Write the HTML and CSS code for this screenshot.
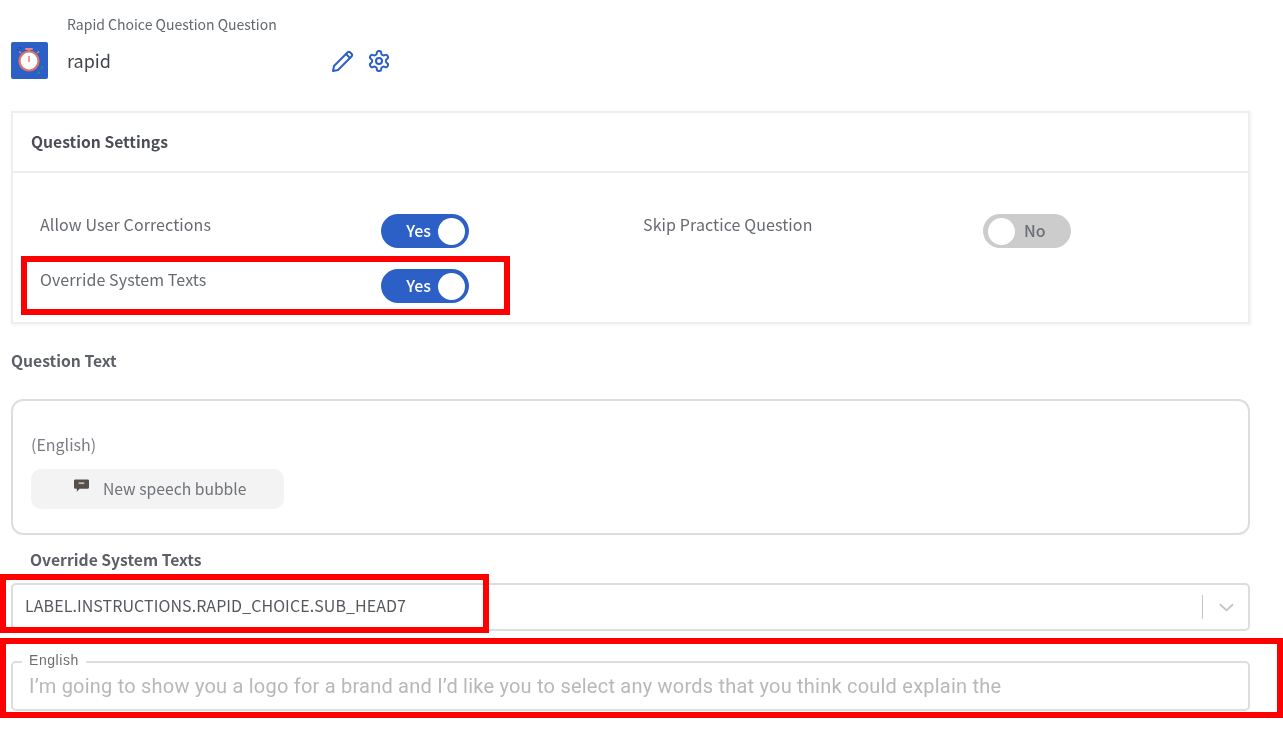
FILE: index.html
```html
<!DOCTYPE html>
<html lang="en">
<head>
    <meta charset="UTF-8">
    <meta name="viewport" content="width=device-width, initial-scale=1.0">
    <title>Rapid Choice Question</title>
    <link rel="stylesheet" href="styles.css">
</head>
<body>
    <div class="page">
        <div class="question-head">
            <svg class="type-icon" viewBox="0 0 37 37">
                <rect width="37" height="37" rx="2" fill="#2c60c6"></rect>
                <rect x="14" y="6" width="8" height="2" rx="1" fill="#e08a80"></rect>
                <line x1="18" y1="8" x2="18" y2="10" stroke="#e08a80" stroke-width="2"></line>
                <line x1="26" y1="11" x2="28" y2="9.500" stroke="#e08a80" stroke-width="1.500"></line>
                <line x1="10" y1="11" x2="8" y2="9.500" stroke="#e08a80" stroke-width="1.500"></line>
                <circle cx="18" cy="19" r="9.500" fill="#ffffff" stroke="#e0726c" stroke-width="2.200"></circle>
                <line x1="18" y1="14" x2="18" y2="20" stroke="#e05a55" stroke-width="1.200"></line>
                <path d="M30 27 L32 24 M26 32 L29 30" stroke="#2f8f78" stroke-width="1.200" fill="none"></path>
                <path d="M6 7 L8 9 M9 5 L10 7" stroke="#1c3f8a" stroke-width="1" fill="none"></path>
            </svg>
            <div class="head-text">
                <div class="head-label">Rapid Choice Question Question</div>
                <div class="head-name">rapid</div>
            </div>
            <div class="head-actions">
                <svg class="action-icon" viewBox="0 0 24 24" fill="none" stroke="currentColor" stroke-width="2" stroke-linecap="round" stroke-linejoin="round">
                    <path d="M3 21l1-5L17.500 2.500a2 2 0 0 1 2.800 0l1.200 1.200a2 2 0 0 1 0 2.800L8 20z"></path>
                    <line x1="16" y1="4" x2="20" y2="8"></line>
                </svg>
                <svg class="action-icon gear" viewBox="0 0 24 24" fill="none" stroke="currentColor" stroke-width="2" stroke-linecap="round" stroke-linejoin="round">
                    <path d="M12.220 2h-.44a2 2 0 0 0-2 2v.18a2 2 0 0 1-1 1.730l-.43.25a2 2 0 0 1-2 0l-.15-.08a2 2 0 0 0-2.730.73l-.22.38a2 2 0 0 0 .73 2.730l.15.1a2 2 0 0 1 1 1.720v.51a2 2 0 0 1-1 1.740l-.15.09a2 2 0 0 0-.73 2.730l.22.38a2 2 0 0 0 2.730.73l.15-.08a2 2 0 0 1 2 0l.43.25a2 2 0 0 1 1 1.730V20a2 2 0 0 0 2 2h.44a2 2 0 0 0 2-2v-.18a2 2 0 0 1 1-1.730l.43-.25a2 2 0 0 1 2 0l.15.08a2 2 0 0 0 2.730-.73l.22-.39a2 2 0 0 0-.73-2.730l-.15-.08a2 2 0 0 1-1-1.740v-.5a2 2 0 0 1 1-1.740l.15-.09a2 2 0 0 0 .73-2.730l-.22-.38a2 2 0 0 0-2.730-.73l-.15.08a2 2 0 0 1-2 0l-.43-.25a2 2 0 0 1-1-1.730V4a2 2 0 0 0-2-2z"></path>
                    <circle cx="12" cy="12" r="3"></circle>
                </svg>
            </div>
        </div>

        <section class="card">
            <div class="card-title">Question Settings</div>
            <div class="settings-grid">
                <div class="setting">
                    <span class="setting-label">Allow User Corrections</span>
                    <span class="toggle on"><span class="toggle-text">Yes</span><span class="knob"></span></span>
                </div>
                <div class="setting setting-right">
                    <span class="setting-label">Skip Practice Question</span>
                    <span class="toggle off"><span class="knob"></span><span class="toggle-text">No</span></span>
                </div>
                <div class="setting">
                    <span class="setting-label">Override System Texts</span>
                    <span class="toggle on"><span class="toggle-text">Yes</span><span class="knob"></span></span>
                </div>
            </div>
        </section>

        <h3 class="section-title">Question Text</h3>
        <div class="text-box">
            <div class="lang">(English)</div>
            <div class="bubble-btn">
                <svg class="bubble-icon" viewBox="0 0 16 14">
                    <path d="M1.500 0h13A1.500 1.500 0 0 1 16 1.500v7a1.500 1.500 0 0 1-1.500 1.500H6l-3 3v-3H1.500A1.500 1.500 0 0 1 0 8.500v-7A1.500 1.500 0 0 1 1.500 0z" fill="#55504c"></path>
                    <path d="M5 3h6v2H5z" fill="#c9b7a0"></path>
                </svg>
                <span>New speech bubble</span>
            </div>
        </div>

        <h3 class="override-title">Override System Texts</h3>
        <div class="select-box">
            <span class="select-value">LABEL.INSTRUCTIONS.RAPID_CHOICE.SUB_HEAD7</span>
            <span class="select-sep"></span>
            <svg class="chevron" viewBox="0 0 16 9" fill="none" stroke="currentColor" stroke-width="2">
                <polyline points="1 1 8 7.500 15 1"></polyline>
            </svg>
        </div>
        <fieldset class="outlined">
            <legend>English</legend>
            <input class="outlined-input" type="text" placeholder="I’m going to show you a logo for a brand and I’d like you to select any words that you think could explain the">
        </fieldset>
    </div>

    <!-- annotation boxes on top of the screenshot -->
    <div class="mark mark-toggle"></div>
    <div class="mark mark-select"></div>
    <div class="mark mark-input"></div>
</body>
</html>
```

FILE: styles.css
```css
* {
    margin: 0;
    padding: 0;
    box-sizing: border-box;
}

body {
    font-family: "Noto Sans CJK KR", "Noto Sans", sans-serif;
    background: white;
    color: #55595f;
    height: 734px;
    overflow: hidden;
    position: relative;
}

.page {
    width: 1250px;
    padding-left: 11px;
    filter: blur(0.4px);
}

.question-head {
    display: flex;
    height: 111px;
    padding-top: 15px;
    align-items: flex-start;
}

.type-icon {
    width: 37px;
    height: 37px;
    flex-shrink: 0;
    margin-top: 27px;
}

.head-text {
    width: 263px;
    margin-left: 19px;
}

.head-label {
    font-size: 14px;
    line-height: 18px;
    color: #63676e;
}

.head-name {
    font-size: 18px;
    line-height: 24px;
    margin-top: 15px;
    color: #42464c;
}

.head-actions {
    display: flex;
    gap: 13px;
    color: #2c60c6;
    padding-top: 35px;
}

.action-icon {
    width: 24px;
    height: 24px;
}

.gear {
    margin-top: -1px;
}

.card {
    height: 213px;
    border: 2px solid #eeeeee;
    box-shadow: 1px 1px 4px rgba(0, 0, 0, 0.06);
}

.card-title {
    height: 60px;
    padding: 18px 18px 0;
    font-size: 15.700px;
    line-height: 22px;
    font-weight: 700;
    color: #4a4e54;
    border-bottom: 2px solid #eeeeee;
}

.settings-grid {
    display: grid;
    grid-template-columns: 603px 1fr;
    row-gap: 20px;
    padding: 40px 0 0 27px;
}

.setting {
    display: flex;
    align-items: flex-start;
}

.setting-label {
    width: 341px;
    font-size: 16px;
    line-height: 22px;
    letter-spacing: 0.1px;
    color: #666a70;
}

.setting-right .setting-label {
    width: 340px;
}

.toggle {
    width: 88px;
    height: 34px;
    margin-top: 1px;
    border-radius: 17px;
    display: flex;
    align-items: center;
    padding-bottom: 2px;
    font-size: 16px;
    font-weight: 500;
}

.toggle.on {
    background: #2c60c6;
    color: white;
    justify-content: flex-end;
    padding-right: 4px;
    gap: 7px;
}

.toggle.off {
    background: #cccccc;
    color: #6d6f78;
    padding-left: 5px;
    gap: 9px;
}

.knob {
    width: 27px;
    height: 27px;
    border-radius: 50%;
    background: white;
    margin-bottom: -2px;
}

.section-title {
    font-size: 15.700px;
    line-height: 22px;
    font-weight: 700;
    color: #5c6066;
    margin-top: 26px;
}

.text-box {
    height: 136px;
    margin-top: 27px;
    border: 2px solid #dddddd;
    border-radius: 12px;
    padding: 32px 18px 0;
}

.lang {
    font-size: 16px;
    line-height: 22px;
    color: #7a7d83;
}

.bubble-btn {
    width: 253px;
    height: 40px;
    margin-top: 14px;
    padding: 0 0 2px 43px;
    background: #f3f3f3;
    border-radius: 10px;
    display: flex;
    align-items: center;
    font-size: 15.700px;
    color: #6f7278;
}

.bubble-icon {
    width: 15px;
    height: 14px;
    margin-right: 14px;
    margin-top: -5px;
}

.override-title {
    font-size: 15.700px;
    line-height: 22px;
    font-weight: 700;
    color: #5c6066;
    margin: 14px 0 0 19px;
}

.select-box {
    height: 48px;
    margin-top: 12px;
    border: 2px solid #dddddd;
    border-radius: 5px;
    display: flex;
    align-items: center;
    padding: 0 14px 0 12px;
}

.select-value {
    flex: 1;
    font-size: 16px;
    line-height: 22px;
    letter-spacing: 0.07px;
    margin-top: -5px;
    color: #55595f;
}

.select-sep {
    width: 1px;
    height: 24px;
    background: #c4c4c4;
    margin: 0 16px 0 1px;
}

.chevron {
    width: 15px;
    height: 9px;
    color: #c4c4c4;
}

.outlined {
    height: 58px;
    margin-top: 22px;
    border: 2px solid #dddddd;
    border-radius: 5px;
    padding: 0 16px;
}

.outlined legend {
    font-family: "Liberation Sans", sans-serif;
    font-size: 14px;
    line-height: 15px;
    letter-spacing: 0.55px;
    color: #6e6e6e;
    padding: 0 7px 2px;
    margin-left: -7px;
}

.outlined-input {
    display: block;
    width: 100%;
    height: 32px;
    border: none;
    outline: none;
    background: transparent;
    font-family: Roboto, sans-serif;
    font-size: 20px;
    letter-spacing: 0.22px;
}

.outlined-input::placeholder {
    color: #b8b8b8;
    opacity: 1;
}

.mark {
    position: absolute;
    border: 6px solid #ff0000;
}

.mark-toggle {
    left: 21px;
    top: 256px;
    width: 489px;
    height: 59px;
}

.mark-select {
    left: 0;
    top: 574px;
    width: 489px;
    height: 59px;
}

.mark-input {
    left: 0;
    top: 638px;
    width: 1283px;
    height: 80px;
}
```
